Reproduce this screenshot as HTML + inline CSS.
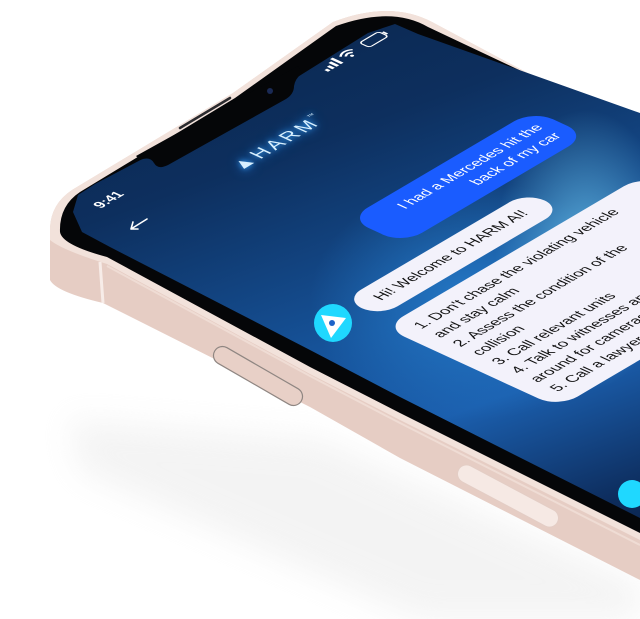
<!DOCTYPE html>
<html><head><meta charset="utf-8"><style>
html,body{margin:0;padding:0;background:#fff;}
#root{position:relative;width:640px;height:619px;overflow:hidden;background:#fff;font-family:"Liberation Sans",sans-serif;}
svg.layer{position:absolute;left:0;top:0;}
#screen{position:absolute;left:0;top:0;width:640px;height:619px;
clip-path:polygon(73px 212px,78px 195px,95px 184px,150px 155px,296px 78px,368px 33px,395px 24px,418px 34px,640px 113px,640px 518px,400px 397px,310px 350px,110px 247px,82px 232px);
background:
radial-gradient(ellipse 90px 140px at 585px 250px,rgba(110,200,240,.75),rgba(110,200,240,0) 100%),
radial-gradient(ellipse 160px 120px at 470px 300px,rgba(40,130,210,.8),rgba(40,130,210,0) 100%),
linear-gradient(160deg,#0a2246 0%,#0d2f5e 30%,#16539a 55%,#1b5fae 68%,#0d2c5c 85%,#081a3a 100%);}
#c{position:absolute;left:0;top:0;width:400px;height:700px;transform-origin:0 0;
transform:matrix(0.862,-0.508,0.908,0.418,46.8,215.6);color:#fff;font-size:15px;}
.abs{position:absolute;white-space:nowrap;}
.bub{position:absolute;box-sizing:border-box;white-space:nowrap;line-height:20px;}
</style></head><body><div id="root">

<svg class="layer" width="640" height="619" viewBox="0 0 640 619">
<defs><filter id="bl" x="-20%" y="-20%" width="140%" height="140%"><feGaussianBlur stdDeviation="16"/></filter></defs>
<path d="M70,420 L320,440 L640,585 L640,619 L420,619 L80,470 Z" fill="#e6e6e6" filter="url(#bl)" opacity=".45"/>
<path d="M50,280 L50,228 Q51,204 72,190 L233,93 L333,22 Q390,0 432,22 L640,133 L640,580 L400,458 L310,407 L103,303 Q56,292 50,280 Z" fill="#e6cdc4"/>
<path d="M50,240 L50,228 Q51,204 72,190 L233,93 L333,22 Q390,0 432,22 L640,133 L640,540 L400,420 L310,374 L107,264 Q62,250 50,240 Z" fill="#f2e2db"/>
<path d="M60,232 Q59,206 80,192 L235,98 L336,26 Q392,6 428,27 L640,127 L640,533 L400,413 L310,367 L107,257 Q62,245 60,232 Z" fill="#050608"/>
<path d="M100,262 L103,303" stroke="#f7ece8" stroke-width="3"/>
<path d="M107,266 L310,376 L400,423 L640,545" stroke="#efdcd4" stroke-width="2" fill="none"/>
<g transform="translate(258,376) rotate(30)"><rect x="-50" y="-9" width="100" height="18" rx="9" fill="#e8d0c7" stroke="#8f8682" stroke-width="1.2"/></g>
<g transform="translate(508,496) rotate(28)"><rect x="-56" y="-9" width="112" height="18" rx="9" fill="#f6e9e4" stroke="#e3cdc5" stroke-width="1"/></g>
</svg>

<div id="screen">
<div id="c">
 <div class="abs" style="left:35px;top:13px;font-size:14px;font-weight:bold;">9:41</div>
 <div class="abs" style="left:148px;top:56px;font-size:20px;letter-spacing:3px;color:#d8f0ff;text-shadow:0 0 6px #39a8ff,0 0 12px #2a8cff;">&#9650;HARM<span style="font-size:7px;vertical-align:top">&#8482;</span></div>
 <svg class="abs" style="left:300px;top:9px" width="80" height="16" viewBox="0 0 80 16">
  <rect x="2" y="10" width="3" height="4" fill="#fff"/><rect x="7" y="8" width="3" height="6" fill="#fff"/><rect x="12" y="5" width="3" height="9" fill="#fff"/><rect x="17" y="2" width="3" height="12" fill="#fff"/>
  <path d="M25,6 Q32,0 39,6 M28,9 Q32,5 36,9" stroke="#fff" stroke-width="2" fill="none"/><circle cx="32" cy="12" r="1.6" fill="#fff"/>
  <rect x="50" y="3" width="22" height="11" rx="3" fill="none" stroke="#fff" stroke-width="1.4"/><rect x="73" y="6" width="2" height="5" fill="#fff"/>
 </svg>
 <div class="bub" style="left:150px;top:190px;width:214px;height:60px;padding:11px 14px;background:#1a5cff;border-radius:22px;text-align:right;">I had a Mercedes hit the<br>back of my car</div>
 <div class="bub" style="left:58px;top:272px;width:212px;height:40px;padding:10px 18px;background:#f3f2fb;color:#111;border-radius:20px;">Hi! Welcome to HARM AI!</div>
 <div class="bub" style="left:48px;top:326px;width:300px;height:192px;padding:10px 17px;background:#f3f2fb;color:#111;border-radius:22px;line-height:21.4px;">1. Don't chase the violating vehicle<br>and stay calm<br>2. Assess the condition of the<br>collision<br>3. Call relevant units<br>4. Talk to witnesses and look<br>around for cameras<br>5. Call a lawyer if needed</div>
</div>
<!-- back arrow (screen space) -->
<svg class="layer" width="640" height="619" viewBox="0 0 640 619">
 <path d="M147,219 L131,229 M131,229 L138,229 M131,229 L133,222" stroke="#fff" stroke-width="1.6" fill="none" stroke-linecap="round"/>
 <circle cx="333" cy="323" r="19" fill="#1fd8ff"/>
 <path d="M321,315 L346,318 L331,338 Z" fill="#fff"/>
 <circle cx="332" cy="323" r="3" fill="#1d63c8"/>
</svg>
</div>

<svg class="layer" width="640" height="619" viewBox="0 0 640 619">
 <path d="M140,160 Q150,156 154,163 Q158,170 168,165 L286,99 Q294,94 294,86 Q295,79 302,73 L298,66 L136,156 Z" fill="#050608"/>
 <circle cx="270" cy="91" r="3" fill="#1a2a55"/>
 <path d="M180,128 L230,98" stroke="#2a2a2e" stroke-width="2.5" stroke-linecap="round"/>
 <circle cx="632" cy="494" r="14" fill="#1fd8ff"/>
</svg>
</div></body></html>
